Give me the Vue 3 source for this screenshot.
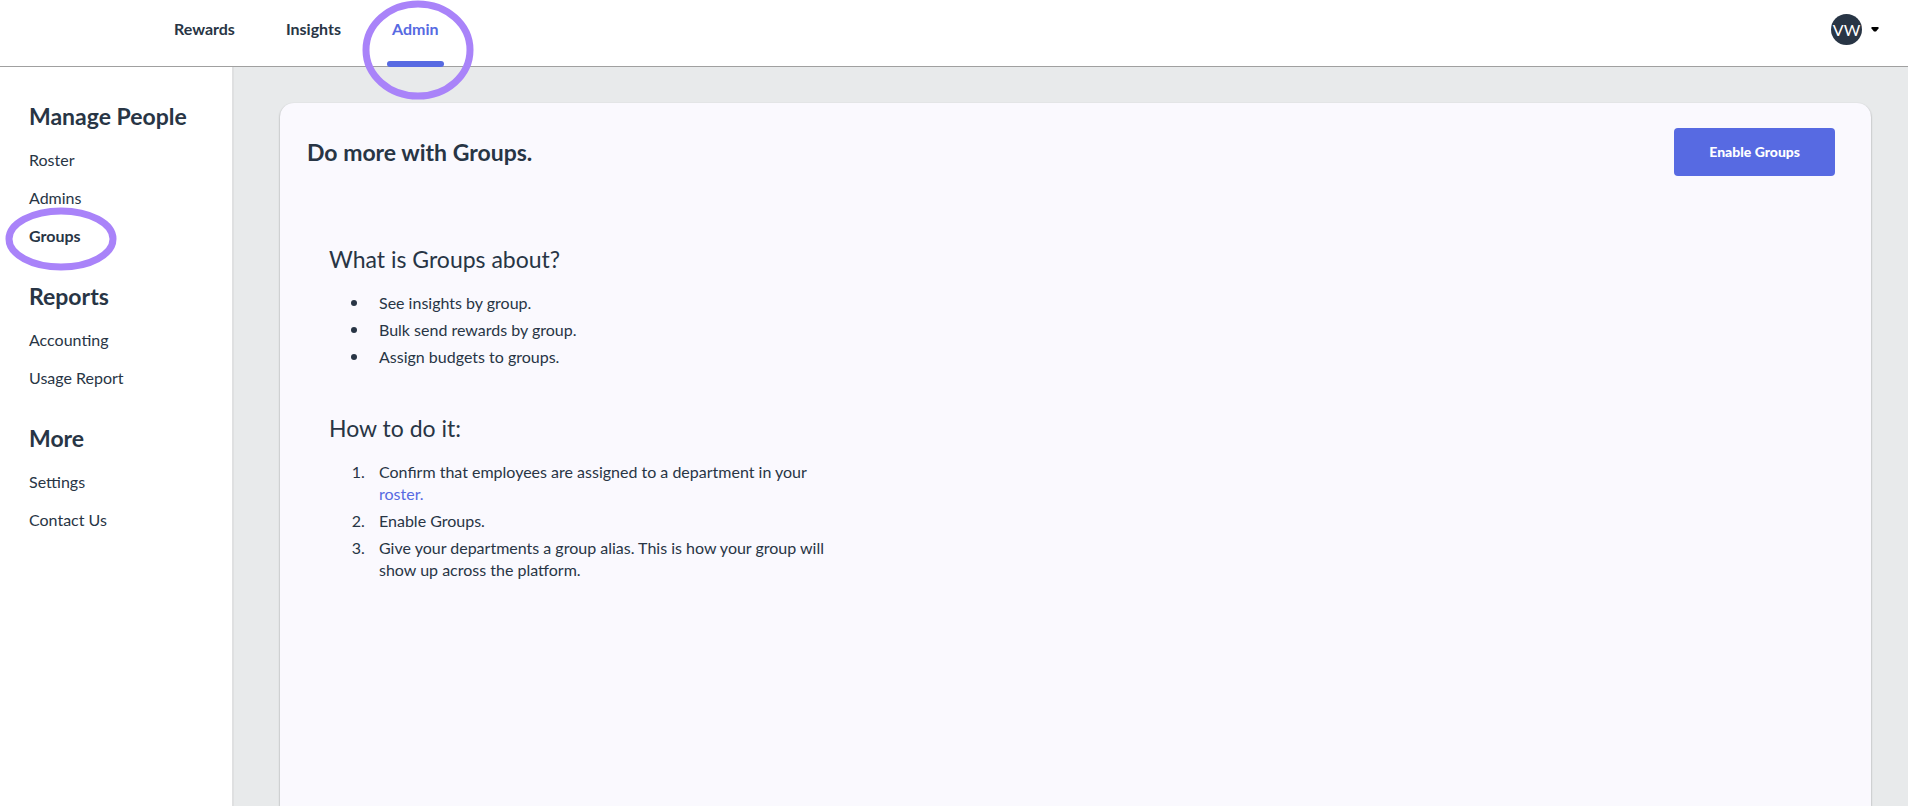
<template>
  <div class="page">
    <header class="topbar">
      <nav class="topnav">
        <a
          v-for="tab in tabs"
          :key="tab"
          href="#"
          class="tab"
          :class="{ active: tab === activeTab }"
          @click.prevent="activeTab = tab"
        >
          {{ tab }}
          <svg v-if="tab === 'Admin'" class="ring ring-tab" viewBox="0 0 112 100" aria-hidden="true">
            <ellipse cx="56" cy="50" rx="52" ry="46" />
          </svg>
        </a>
      </nav>
      <button type="button" class="account" aria-label="Account menu">
        <span class="avatar">VW</span>
        <svg class="caret" viewBox="0 0 8 5" aria-hidden="true">
          <path d="M0.5 0H7.5V1.5L5 4.5H3L0.5 1.5Z" />
        </svg>
      </button>
    </header>

    <div class="body">
      <aside class="sidebar">
        <section v-for="section in sections" :key="section.title" class="side-section">
          <h2 class="side-title">{{ section.title }}</h2>
          <ul class="side-list">
            <li v-for="item in section.items" :key="item">
              <a
                href="#"
                class="side-link"
                :class="{ active: item === activeItem }"
                @click.prevent="activeItem = item"
              >
                {{ item }}
                <svg v-if="item === 'Groups'" class="ring ring-side" viewBox="0 0 112 64" aria-hidden="true">
                  <ellipse cx="56" cy="32" rx="52" ry="28" />
                </svg>
              </a>
            </li>
          </ul>
        </section>
      </aside>

      <main class="main">
        <div class="card">
          <div class="card-header">
            <h1 class="card-title">Do more with Groups.</h1>
            <button type="button" class="enable-btn">Enable Groups</button>
          </div>
          <div class="card-content">
            <section class="info">
              <h2 class="info-title">What is Groups about?</h2>
              <ul class="info-list bullets">
                <li>See insights by group.</li>
                <li>Bulk send rewards by group.</li>
                <li>Assign budgets to groups.</li>
              </ul>
            </section>
            <section class="info">
              <h2 class="info-title">How to do it:</h2>
              <ol class="info-list steps">
                <li>Confirm that employees are assigned to a department in your <a href="#">roster.</a></li>
                <li>Enable Groups.</li>
                <li>Give your departments a group alias. This is how your group will show up across the platform.</li>
              </ol>
            </section>
          </div>
        </div>
      </main>
    </div>
  </div>
</template>

<script setup>
import { ref } from 'vue'

const tabs = ['Rewards', 'Insights', 'Admin']
const activeTab = ref('Admin')

const sections = [
  { title: 'Manage People', items: ['Roster', 'Admins', 'Groups'] },
  { title: 'Reports', items: ['Accounting', 'Usage Report'] },
  { title: 'More', items: ['Settings', 'Contact Us'] }
]
const activeItem = ref('Groups')
</script>

<style>
body {
  margin: 0;
}
</style>

<style scoped>
.page {
  display: flex;
  flex-direction: column;
  min-height: 100vh;
  background: #e8eaeb;
  color: #283545;
  font-family: Lato, "Liberation Sans", sans-serif;
  font-size: 16px;
  line-height: 22px;
}

.page * {
  box-sizing: border-box;
}

a {
  color: #576ae2;
  text-decoration: none;
}

button {
  border: none;
  font-family: inherit;
  cursor: pointer;
}

h1,
h2 {
  margin: 0;
  font-size: 23px;
  line-height: 32px;
}

ul,
ol {
  margin: 0;
  padding: 0;
}

.topbar {
  display: flex;
  justify-content: space-between;
  height: 67px;
  padding: 0 29px 0 169px;
  background: #fff;
  border-bottom: 1px solid #a0a0a0;
}

.topnav {
  display: flex;
  gap: 41px;
}

.tab {
  position: relative;
  height: 67px;
  padding: 18px 5px 0;
  color: #283545;
  font-weight: 700;
}

.tab.active {
  color: #576ae2;
}

.tab.active::after {
  content: "";
  position: absolute;
  left: 0;
  right: 0;
  bottom: 0;
  height: 6px;
  border-radius: 3px;
  background: #576ae2;
}

.ring {
  position: absolute;
  z-index: 2;
  fill: none;
  stroke: #a983f9;
  stroke-width: 7px;
  pointer-events: none;
}

.ring-tab {
  top: 0;
  left: 50%;
  width: 112px;
  height: 100px;
  margin-left: -53px;
}

.ring-side {
  top: -10px;
  left: -24px;
  width: 112px;
  height: 64px;
}

.account {
  display: flex;
  align-items: center;
  gap: 9px;
  height: 58px;
  padding: 0;
  background: none;
}

.avatar {
  width: 31px;
  height: 31px;
  border-radius: 50%;
  background: #283545;
  color: #fff;
  font-size: 16px;
  line-height: 31px;
  text-align: center;
}

.caret {
  width: 8px;
  height: 5px;
  fill: #000;
}

.body {
  display: flex;
  flex: 1;
}

.sidebar {
  flex: none;
  width: 234px;
  padding: 33px 0 0 29px;
  background: #fff;
  border-right: 2px solid #dfe0e1;
}

.side-section {
  margin-bottom: 25px;
}

.side-title {
  margin-bottom: 9px;
}

.side-list {
  list-style: none;
}

.side-link {
  position: relative;
  display: block;
  color: #283545;
  line-height: 38px;
}

.side-link.active {
  font-weight: 700;
}

.main {
  display: flex;
  flex: 1;
  padding: 36px 37px 0 46px;
}

.card {
  flex: 1;
  padding: 25px 36px 0 27px;
  border-radius: 14px 14px 0 0;
  background: #faf9fe;
  box-shadow: 0 1px 2px rgba(0, 0, 0, 0.4);
}

.card-header {
  display: flex;
  align-items: center;
  justify-content: space-between;
}

.enable-btn {
  height: 48px;
  padding: 0 35px 2px;
  border-radius: 4px;
  background: #576ae2;
  color: #fff;
  font-size: 14px;
  font-weight: 900;
}

.card-content {
  max-width: 520px;
  padding: 67px 0 0 22px;
}

.info {
  margin-bottom: 44px;
}

.info-title {
  margin-bottom: 17px;
  font-weight: 400;
}

.info-list li {
  margin-bottom: 5px;
}

.bullets {
  padding-left: 22px;
  list-style: none;
}

.bullets li {
  display: flex;
  align-items: center;
  gap: 22px;
}

.bullets li::before {
  content: "";
  width: 6px;
  height: 6px;
  border-radius: 50%;
  background: #283545;
}

.steps {
  padding-left: 40px;
}

.steps li {
  padding-left: 10px;
}
</style>
